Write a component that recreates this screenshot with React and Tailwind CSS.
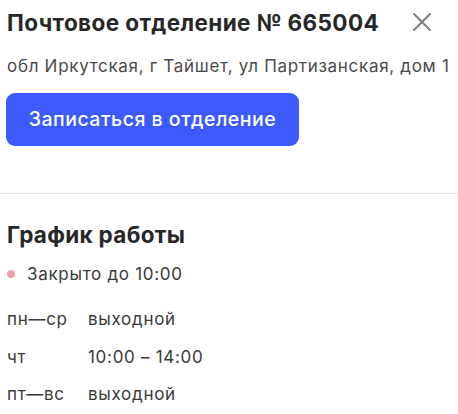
import React from "react";

export default function App() {
  const rows = [
    ["пн—ср", "выходной"],
    ["чт", "10:00 – 14:00"],
    ["пт—вс", "выходной"],
  ];
  return (
    <div className="w-[458px] h-[414px] bg-white overflow-hidden" style={{ fontFamily: "Inter, 'Noto Sans', sans-serif" }}>
      <div className="pl-[7px] pr-[26px] pt-[9px] flex items-start justify-between">
        <h1 className="text-[22.5px] leading-[28px] font-bold text-[#272727] tracking-[0.4px] whitespace-nowrap">Почтовое отделение № 665004</h1>
        <svg width="20" height="20" viewBox="0 0 20 20" className="mt-[3px] shrink-0">
          <path d="M2 2 L18 18 M18 2 L2 18" stroke="#7f7f7f" strokeWidth="2" strokeLinecap="round" />
        </svg>
      </div>
      <div className="pl-[7px] mt-[18px] text-[17px] leading-[22px] text-[#4a4a4a] tracking-[0.7px] whitespace-nowrap">
        обл Иркутская, г Тайшет, ул Партизанская, дом 1
      </div>
      <div className="pl-[6px] mt-[16px]">
        <button className="w-[293px] h-[53px] rounded-[9px] bg-[#3d5afe] text-white text-[19.5px] font-medium tracking-[0.5px]">
          Записаться в отделение
        </button>
      </div>
      <div className="mt-[47px] h-[1px] bg-[#e6e6e6]" />
      <div className="pl-[7px] mt-[27px] text-[22.5px] leading-[28px] font-bold text-[#272727] tracking-[0.3px]">График работы</div>
      <div className="pl-[7px] mt-[14px] flex items-center gap-[12px] text-[17px] leading-[22px] text-[#3a3a3a] tracking-[0.7px]">
        <span className="w-[8px] h-[8px] rounded-full bg-[#eaa3ae]" />
        <span>Закрыто до 10:00</span>
      </div>
      <div className="pl-[7px] mt-[23px] flex flex-col gap-[15.5px] text-[17px] leading-[22px] text-[#3a3a3a] tracking-[0.7px]">
        {rows.map(([d, t]) => (
          <div key={d} className="flex">
            <span className="w-[81px]">{d}</span>
            <span>{t}</span>
          </div>
        ))}
      </div>
    </div>
  );
}
